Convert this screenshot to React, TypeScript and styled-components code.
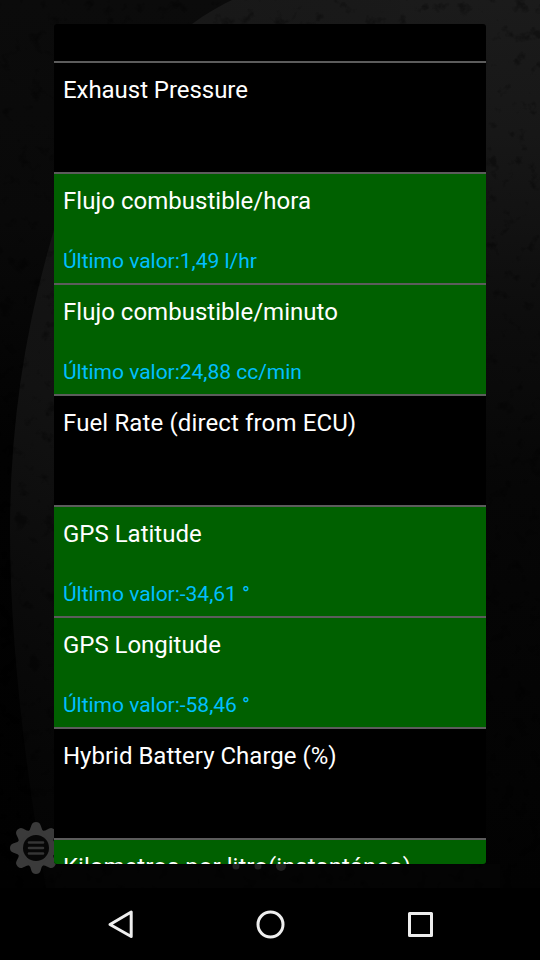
import React from "react";
import styled, { createGlobalStyle } from "styled-components";

const GlobalStyle = createGlobalStyle`
  * { box-sizing: border-box; }
  html, body { margin: 0; padding: 0; background: #000; }
`;

const Screen = styled.main`
  position: relative;
  width: 540px;
  height: 960px;
  display: flex;
  flex-direction: column;
  overflow: hidden;
  background: #000;
  font-family: Roboto, "Liberation Sans", sans-serif;
`;

const Wallpaper = styled.svg`
  position: absolute;
  top: 0;
  left: 0;
  display: block;
`;

const Content = styled.div`
  position: relative;
  height: 888px;
  display: flex;
  justify-content: center;
  align-items: center;
`;

const Dialog = styled.section`
  width: 432px;
  height: 840px;
  border-radius: 3px;
  background: #000;
  overflow: hidden;
`;

const List = styled.ul`
  list-style: none;
  margin: 0;
  padding: 0;
`;

const Lead = styled.li`
  height: 39px;
  border-bottom: 2px solid #5c5c5c;
`;

const Row = styled.li<{ $active: boolean }>`
  height: 111px;
  display: flex;
  flex-direction: column;
  justify-content: space-between;
  padding: 13px 9px 9px;
  border-bottom: 2px solid #5c5c5c;
  background: ${(p) => (p.$active ? "#006000" : "#000")};
`;

const Title = styled.span<{ $tracking?: number }>`
  color: #fff;
  font-size: 24px;
  line-height: 28px;
  letter-spacing: ${(p) => p.$tracking ?? 0}px;
  white-space: pre;
`;

const Value = styled.span`
  color: #00bfff;
  font-size: 21px;
  line-height: 26px;
  letter-spacing: -0.02px;
  white-space: pre;
`;

const NavBar = styled.nav`
  position: relative;
  height: 72px;
  display: grid;
  grid-template-columns: repeat(3, 150px);
  justify-content: center;
  align-items: center;
  justify-items: center;
  background: #000;
`;

const NavButton = styled.button`
  width: 36px;
  height: 36px;
  padding: 0;
  border: 0;
  background: none;
  svg { display: block; }
`;

const sensors: { name: string; value?: string; tracking?: number }[] = [
  { name: "Exhaust Pressure", tracking: -0.05 },
  { name: "Flujo combustible/hora", value: "1,49 l/hr", tracking: 0.03 },
  { name: "Flujo combustible/minuto", value: "24,88 cc/min", tracking: 0.02 },
  { name: "Fuel Rate (direct from ECU)", tracking: 0.13 },
  { name: "GPS Latitude", value: "-34,61 °" },
  { name: "GPS Longitude", value: "-58,46 °", tracking: -0.03 },
  { name: "Hybrid Battery Charge (%)" },
  { name: "Kilometros por litro(instantáneo)", value: "", tracking: 0.03 },
];

const Background = () => (
  <Wallpaper width="540" height="888" viewBox="0 0 540 888" aria-hidden="true">
    <defs>
      <linearGradient id="base" x1="0" y1="0" x2="0" y2="1">
        <stop offset="0" stopColor="#0b0b0b" />
        <stop offset="0.25" stopColor="#090909" />
        <stop offset="0.5" stopColor="#020202" />
        <stop offset="1" stopColor="#010101" />
      </linearGradient>
      <linearGradient id="shade" gradientUnits="userSpaceOnUse" x1="20" y1="888" x2="480" y2="0">
        <stop offset="0" stopColor="#030303" />
        <stop offset="0.13" stopColor="#060606" />
        <stop offset="0.28" stopColor="#0b0b0b" />
        <stop offset="0.45" stopColor="#121212" />
        <stop offset="1" stopColor="#1a1a1a" />
      </linearGradient>
      <linearGradient id="rightShade" x1="0" y1="0" x2="0" y2="1">
        <stop offset="0" stopColor="#1b1b1b" />
        <stop offset="0.15" stopColor="#171717" />
        <stop offset="0.35" stopColor="#0d0d0d" />
        <stop offset="0.55" stopColor="#060606" />
        <stop offset="1" stopColor="#020202" />
      </linearGradient>
      <filter id="grain" x="0" y="0" width="100%" height="100%">
        <feTurbulence type="fractalNoise" baseFrequency="0.07" numOctaves="4" seed="21" />
        <feColorMatrix values="0 0 0 0 0  0 0 0 0 0  0 0 0 0 0  5 0 0 0 -3.1" />
      </filter>
    </defs>
    <rect width="540" height="888" fill="url(#base)" />
    <path
      d="M232 0C150 40 90 120 54 230C24 330 10 430 10 530C10 640 24 760 46 888H400V0Z"
      fill="url(#shade)"
    />
    <path d="M400 0H540V888H400Z" fill="url(#rightShade)" />
    <path d="M46 864H500V888H46Z" fill="#040404" />
    <rect width="540" height="888" filter="url(#grain)" opacity="0.32" />
    <g fill="#202020">
      <circle cx="236" cy="866" r="3.5" />
      <circle cx="258" cy="866" r="3.5" />
      <circle cx="281" cy="866" r="5" />
    </g>
    <g transform="translate(36 848)">
      <g fill="#3a3a3a">
        <circle r="18.5" />
        {[0, 45, 90, 135, 180, 225, 270, 315].map((a) => (
          <path
            key={a}
            transform={`rotate(${a})`}
            d="M-9 -15 Q-5.5 -18 -4.5 -23 Q-3.5 -26 0 -26 Q3.5 -26 4.5 -23 Q5.5 -18 9 -15Z"
          />
        ))}
      </g>
      <circle r="13" fill="#070707" />
      <path
        d="M-7 -5.5H7M-7 0H7M-7 5.5H7"
        stroke="#353535"
        strokeWidth="2.6"
        strokeLinecap="round"
      />
    </g>
  </Wallpaper>
);

export default function App() {
  return (
    <Screen>
      <GlobalStyle />
      <Background />
      <Content>
        <Dialog>
          <List>
            <Lead />
            {sensors.map((s) => (
              <Row key={s.name} $active={s.value !== undefined}>
                <Title $tracking={s.tracking}>{s.name}</Title>
                {s.value && <Value>Último valor:{s.value}</Value>}
              </Row>
            ))}
          </List>
        </Dialog>
      </Content>
      <NavBar>
        <NavButton aria-label="Back">
          <svg width="36" height="36" fill="none" stroke="#eee" strokeWidth="3" strokeLinejoin="round">
            <path d="M29.2 6V30.5L8 18.5Z" />
          </svg>
        </NavButton>
        <NavButton aria-label="Home">
          <svg width="36" height="36" fill="none" stroke="#eee" strokeWidth="3">
            <circle cx="18.5" cy="18.5" r="12.5" />
          </svg>
        </NavButton>
        <NavButton aria-label="Recent apps">
          <svg width="36" height="36" fill="none" stroke="#eee" strokeWidth="3" strokeLinejoin="round">
            <rect x="7.5" y="7.5" width="22" height="22" />
          </svg>
        </NavButton>
      </NavBar>
    </Screen>
  );
}
